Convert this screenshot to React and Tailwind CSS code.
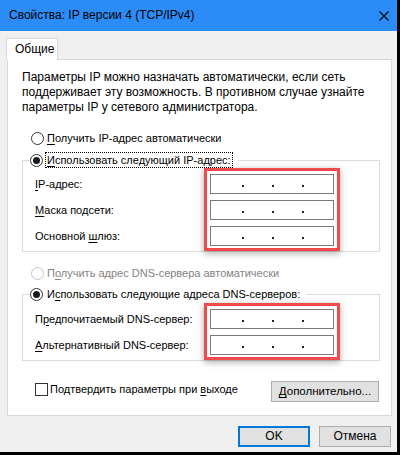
const Radio = ({ checked, disabled }) => (
  <span
    className={`w-[13px] h-[13px] rounded-full border bg-white flex items-center justify-center shrink-0 ${
      disabled ? 'border-[#c6c6c6]' : 'border-[#333333]'
    }`}
  >
    {checked && <span className="w-[7px] h-[7px] rounded-full bg-[#1a1a1a]" />}
  </span>
);

const IpInput = () => (
  <div className="h-[20px] w-[124px] border border-[#7a7a7a] bg-white flex items-end pl-[31px] gap-[28px] pb-[6px]">
    <span className="w-[2px] h-[2px] bg-[#222]" />
    <span className="w-[2px] h-[2px] bg-[#222]" />
    <span className="w-[2px] h-[2px] bg-[#222]" />
  </div>
);

const U = ({ children }) => <span className="underline underline-offset-2">{children}</span>;

const Field = ({ children }) => <div className="h-[20px] flex items-center text-[11px]">{children}</div>;

export default function App() {
  return (
    <div
      className="w-[400px] h-[455px] bg-black pr-[3px] pb-[3px] text-[12px] text-black leading-[15px] whitespace-nowrap"
      style={{ fontFamily: '"Liberation Sans", Arial, sans-serif' }}
    >
      <div className="h-full bg-[#f0f0f0] flex flex-col">
        {/* title bar */}
        <div className="h-[31px] bg-[#2b8cf8] flex items-center justify-between pl-[9px] pr-[8px] shrink-0">
          <span>Свойства: IP версии 4 (TCP/IPv4)</span>
          <svg width="10" height="10" viewBox="0 0 10 10">
            <path d="M0.5 0.5 L9.5 9.5 M9.5 0.5 L0.5 9.5" stroke="#000" strokeWidth="1.1" />
          </svg>
        </div>

        <div className="pl-[6px] pt-[7px]">
          <div className="relative z-10 w-[52px] h-[22px] bg-white border border-b-0 border-[#d9d9d9] flex items-center pl-[8px]">
            Общие
          </div>
          <div className="-mt-px ml-px w-[385px] h-[357px] bg-white border border-[#d9d9d9] pl-[14px] pr-[11px] pt-[10px]">
            <p>
              Параметры IP можно назначать автоматически, если сеть
              <br />
              поддерживает эту возможность. В противном случае узнайте
              <br />
              параметры IP у сетевого администратора.
            </p>

            <div className="mt-[15px] ml-[9px] h-[16px] flex items-center gap-[3px] text-[11px]">
              <Radio />
              <span>
                <U>П</U>олучить IP-адрес автоматически
              </span>
            </div>

            {/* group 1 */}
            <div className="mt-[14px] w-[358px] h-[92px] border border-[#dcdcdc]">
              <div className="-mt-[9px] ml-[7px] w-fit h-[16px] bg-white flex items-center gap-[2px] pr-[5px] text-[11px]">
                <Radio checked />
                <span className="border border-dotted border-black px-px leading-[14px]">
                  <U>И</U>спользовать следующий IP-адрес:
                </span>
              </div>
              <div className="flex">
                <div className="w-[181px] pl-[12px] pt-[6px] flex flex-col gap-[6px]">
                  <Field>
                    <span><U>I</U>P-адрес:</span>
                  </Field>
                  <Field>
                    <span><U>М</U>аска подсети:</span>
                  </Field>
                  <Field>
                    <span>Основной <U>ш</U>люз:</span>
                  </Field>
                </div>
                <div className="w-[136px] h-[83px] border-[3px] border-[#f04a4a] bg-white pl-[3px] pt-[3px] flex flex-col gap-[6px] shadow-[0_2px_7px_rgba(0,0,0,0.35)]">
                  <IpInput />
                  <IpInput />
                  <IpInput />
                </div>
              </div>
            </div>

            <div className="mt-[13px] ml-[9px] h-[16px] flex items-center gap-[3px] text-[11px] text-[#838383]">
              <Radio disabled />
              <span>
                П<U>о</U>лучить адрес DNS-сервера автоматически
              </span>
            </div>

            {/* group 2 */}
            <div className="mt-[13px] w-[358px] h-[67px] border border-[#dcdcdc]">
              <div className="-mt-[9px] ml-[7px] w-fit h-[16px] bg-white flex items-center gap-[3px] pr-[5px] text-[11px]">
                <Radio checked />
                <span className="px-[1px]">
                  И<U>с</U>пользовать следующие адреса DNS-серверов:
                </span>
              </div>
              <div className="flex mt-px">
                <div className="w-[181px] pl-[12px] pt-[6px] flex flex-col gap-[6px]">
                  <Field>
                    <span>П<U>р</U>едпочитаемый DNS-сервер:</span>
                  </Field>
                  <Field>
                    <span><U>А</U>льтернативный DNS-сервер:</span>
                  </Field>
                </div>
                <div className="w-[136px] h-[57px] border-[3px] border-[#f04a4a] bg-white pl-[3px] pt-[3px] flex flex-col gap-[6px] shadow-[0_2px_7px_rgba(0,0,0,0.35)]">
                  <IpInput />
                  <IpInput />
                </div>
              </div>
            </div>

            <div className="mt-[20px] flex items-start justify-between pr-px">
              <div className="ml-[13px] mt-px flex items-center gap-[2px] text-[11px]">
                <span className="w-[13px] h-[13px] border border-[#333333] bg-white" />
                <span>
                  Подтвердить параметры при <U>в</U>ыходе
                </span>
              </div>
              <button className="w-[108px] h-[21px] bg-[#e1e1e1] border border-[#adadad] flex items-center justify-center text-[11.5px]">
                <span>
                  <U>Д</U>ополнительно...
                </span>
              </button>
            </div>
          </div>
        </div>

        <div className="mt-[10px] flex justify-end gap-[9px] pr-[6px]">
          <button className="w-[72px] h-[21px] bg-[#e1e1e1] border-2 border-[#0078d7] flex items-center justify-center">
            OK
          </button>
          <button className="w-[72px] h-[21px] bg-[#e1e1e1] border border-[#adadad] flex items-center justify-center">
            Отмена
          </button>
        </div>
      </div>
    </div>
  );
}
